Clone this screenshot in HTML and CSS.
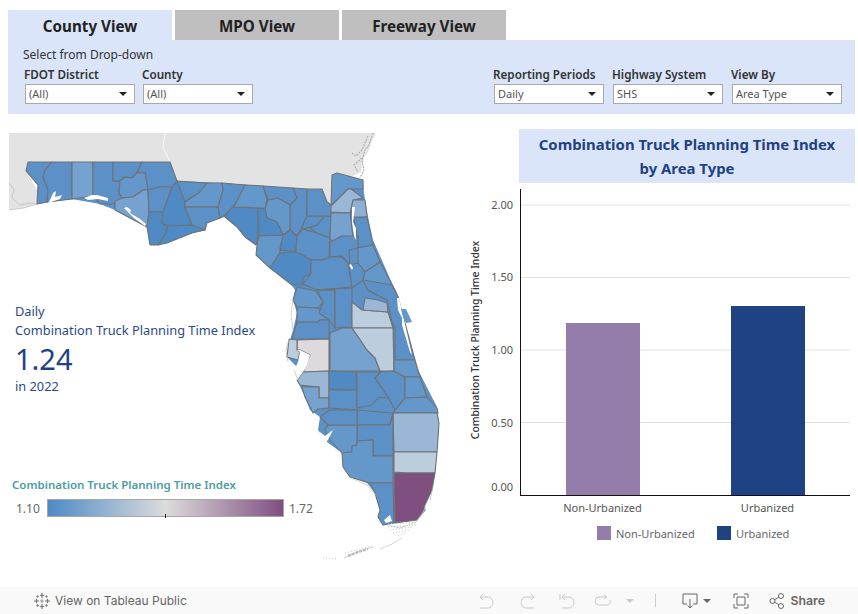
FILE: index.html
```html
<!DOCTYPE html>
<html lang="en">
<head>
  <meta charset="UTF-8">
  <title>Combination Truck Planning Time Index</title>
  <link rel="stylesheet" href="styles.css">
</head>
<body>

  <div class="dashboard">
    <div class="tabs">
      <div class="tab active">County View</div>
      <div class="tab">MPO View</div>
      <div class="tab">Freeway View</div>
    </div>

    <div class="filters">
      <div class="filters-title">Select from Drop-down</div>
      <div class="filter-row">
        <div class="filter-group">
          <div class="filter">
            <div class="filter-label">FDOT District</div>
            <div class="dropdown">(All)</div>
          </div>
          <div class="filter">
            <div class="filter-label">County</div>
            <div class="dropdown">(All)</div>
          </div>
        </div>
        <div class="filter-group right">
          <div class="filter">
            <div class="filter-label">Reporting Periods</div>
            <div class="dropdown">Daily</div>
          </div>
          <div class="filter">
            <div class="filter-label">Highway System</div>
            <div class="dropdown">SHS</div>
          </div>
          <div class="filter">
            <div class="filter-label">View By</div>
            <div class="dropdown">Area Type</div>
          </div>
        </div>
      </div>
    </div>

    <div class="main">
      <div class="map-area">
        <svg class="map" viewBox="8 114 454 473" width="454" height="473">
          <!-- land around florida -->
          <path class="land" d="M9 133H376L372 141 369 150 364 158 361 172 345 180 332 176 332 203 322 201 318 190 222 186 177 184 170 165 28 165 26 171 37 190 37 204 24 208 9 210Z"/>
          <path class="river" d="M165 133L163 147 170 162 175 175 179 181"/>
          <path class="fringe" d="M9 183L14 190 12 198 20 205 30 203 37 204M9 210L24 208 37 204"/>
          <path class="marsh" d="M373 133L369 145 365 150 362 160 364 170 360 178"/>
          <path class="marsh" d="M368 136L362 150 356 156 352 153M362 158L354 165 358 172"/>
          <!-- florida base -->
          <path class="c-b" d="M28 162H170L177 181 222 183 307 189 322 189 327 202 332 205 332 175 337 173 363 180 364 193 368 217 373 240 395 290 398 297 413 360 437 407 439 423 437 452 435 473 432 490 424 507 425 510 417 520 395 523 383 525 378 517 380 510 375 493 367 483 350 477 343 467 342 453 327 442 318 430 320 417 310 410 305 397 297 380 297 367 287 357 290 340 293 330 297 313 293 300 295 290 288 280 273 270 256 255 257 245 245 237 237 227 225 217 220 218 207 223 205 230 192 233 167 243 158 245 150 245 147 227 115 210 100 204 72 199 37 204 38 185 26 171Z"/>
          <g class="counties">
            <polygon class="c-b" points="28,162 52,162 45,170 43,177 48,190 47,202 37,204 38,185 26,171"/>
            <polygon class="c-b" points="52,162 72,162 72,199 47,202 48,190 43,177 45,170"/>
            <polygon class="c-d" points="72,162 93,162 93,196 72,199"/>
            <polygon class="c-b" points="93,162 113,162 113,181 120,181 119,193 122,198 115,204 100,204 93,196"/>
            <polygon class="c-b" points="113,162 142,162 137,173 132,178 125,177 120,181 113,181"/>
            <polygon class="c-b" points="142,162 170,162 177,181 172,187 160,187 148,190 145,173 137,173"/>
            <polygon class="c-c" points="120,181 125,177 132,178 137,173 145,173 148,190 143,190 133,197 122,198 119,193"/>
            <polygon class="c-d" points="115,201 122,198 133,197 143,190 148,190 149,212 147,227 115,210"/>
            <polygon class="c-b" points="148,190 160,187 172,187 163,212 149,212"/>
            <polygon class="c-a" points="149,212 163,212 162,223 168,226 165,235 158,245 150,245 147,227"/>
            <polygon class="c-a" points="172,187 177,181 185,202 185,208 192,225 168,226 162,223 163,212"/>
            <polygon class="c-a" points="168,226 192,225 205,230 192,233 167,243 158,245 165,235"/>
            <polygon class="c-b" points="177,181 207,183 200,192 188,200 185,202"/>
            <polygon class="c-c" points="207,183 222,183 223,190 218,207 185,207 185,202 188,200 200,192"/>
            <polygon class="c-b" points="185,207 218,207 220,218 207,223 205,230 192,225"/>
            <polygon class="c-b" points="222,183 245,185 235,205 225,215 220,218 218,207 223,190"/>
            <polygon class="c-a" points="233,207 258,208 258,236 256,245 245,237 237,227 225,217 225,215"/>
            <polygon class="c-c" points="245,185 263,186 267,200 265,208 258,208 233,207 235,205"/>
            <polygon class="c-b" points="263,186 293,188 297,198 290,205 278,198 268,200"/>
            <polygon class="c-b" points="293,188 307,189 307,216 302,227 297,236 290,230 290,205 297,198"/>
            <polygon class="c-c" points="265,208 268,200 278,198 290,205 290,230 283,235 277,222 267,218"/>
            <polygon class="c-a" points="258,208 265,209 267,218 277,222 283,235 259,236"/>
            <polygon class="c-c" points="259,236 283,235 280,248 280,253 270,268 256,255 257,245"/>
            <polygon class="c-a" points="283,235 290,230 297,236 296,252 280,250"/>
            <polygon class="c-a" points="280,253 296,252 303,255 311,260 311,274 303,277 303,285 292,285 270,268"/>
            <polygon class="c-b" points="297,236 303,229 317,233 330,238 329,258 322,260 311,260 303,255 296,252"/>
            <polygon class="c-b" points="307,216 325,216 317,225 303,229 302,227"/>
            <polygon class="c-b" points="325,216 331,216 330,238 317,233 310,228 317,225"/>
            <polygon class="c-b" points="307,189 322,189 327,202 332,205 331,216 307,216"/>
            <polygon class="c-c" points="332,175 337,173 363,180 363,189 348,189 331,206"/>
            <polygon class="c-f" points="331,212 331,206 348,189 351,189 363,198 353,200 350,213"/>
            <polygon class="c-e" points="353,200 365,200 367,217 353,217 351,210"/>
            <polygon class="c-d" points="331,213 350,213 353,237 342,236 332,242 330,238"/>
            <polygon class="c-b" points="354,218 367,217 373,245 358,248 358,240"/>
            <polygon class="c-b" points="330,242 342,236 358,236 358,248 349,250 350,265 342,256 330,257"/>
            <polygon class="c-c" points="358,248 373,245 380,262 365,272 358,263"/>
            <polygon class="c-b" points="303,284 311,274 311,260 322,260 330,257 342,257 348,263 352,287 317,290"/>
            <polygon class="c-b" points="352,288 349,265 358,263 365,272 363,280"/>
            <polygon class="c-c" points="365,272 380,262 395,290 398,297 387,300 368,290 363,280"/>
            <polygon class="c-b" points="363,280 368,290 387,300 392,322 395,327 395,360 415,360 398,297 392,285"/>
            <polygon class="c-c" points="297,287 316,291 323,302 318,308 297,307 293,300"/>
            <polygon class="c-c" points="297,307 318,308 329,317 329,320 320,320 318,322 297,322"/>
            <polygon class="c-b" points="297,322 318,322 320,320 329,320 329,339 292,339"/>
            <polygon class="c-b" points="317,290 335,290 335,328 329,320 319,313 323,302"/>
            <polygon class="c-b" points="317,290 352,288 352,302 352,328 342,327 335,328 335,290"/>
            <polygon class="c-g" points="352,302 362,310 388,312 393,328 352,328"/>
            <polygon class="c-f" points="363,310 365,298 378,300 387,303 388,312"/>
            <polygon class="c-d" points="330,333 342,328 352,328 359,338 367,350 375,358 380,371 330,371"/>
            <polygon class="c-g" points="352,328 393,328 394,371 380,371 375,358 367,350 359,338"/>
            <polygon class="c-h" points="297,340 329,339 329,371 303,372 310,355 300,350 297,350"/>
            <polygon class="c-g" points="289,339 297,340 297,350 300,352 298,360 287,357"/>
            <polygon class="c-f" points="297,380 303,372 329,371 329,398 319,398 319,387 300,385"/>
            <polygon class="c-d" points="302,387 319,387 319,398 329,398 329,408 318,409 313,413 305,397"/>
            <polygon class="c-a" points="329,371 356,372 357,390 329,389"/>
            <polygon class="c-b" points="329,390 357,390 357,410 329,408"/>
            <polygon class="c-b" points="357,372 381,372 375,378 388,397 378,398 372,405 357,408"/>
            <polygon class="c-b" points="381,372 394,371 405,377 405,398 395,410 388,397 375,378"/>
            <polygon class="c-c" points="394,360 415,360 420,377 405,377 394,371"/>
            <polygon class="c-c" points="405,377 420,377 427,397 405,398"/>
            <polygon class="c-c" points="405,398 427,397 437,408 438,413 393,413"/>
            <polygon class="c-f" points="393,413 437,413 439,423 437,452 394,452"/>
            <polygon class="c-g" points="394,452 437,452 435,473 407,473 394,472"/>
            <polygon class="c-p" points="394,473 435,473 432,490 424,507 425,510 417,520 395,523"/>
            <polygon class="c-b" points="357,410 393,413 390,425 357,425"/>
            <polygon class="c-b" points="357,425 390,425 393,413 393,456 373,456 373,440 357,441"/>
            <polygon class="c-c" points="328,425 357,425 357,445 352,446 352,452 342,453 330,440 325,430"/>
            <polygon class="c-b" points="320,417 329,410 357,410 357,425 328,425"/>
            <polygon class="c-c" points="342,453 352,452 352,446 357,445 357,441 373,440 373,456 393,456 393,483 370,483 350,477 343,467"/>
            <polygon class="c-b" points="370,483 393,483 394,523 383,525 378,517 380,510 375,493"/>
          </g>
          <!-- bays and lagoons -->
          <g class="water">
            <path d="M50 200L53 193 56 191 55 197 62 195 60 199 48 203Z"/>
            <path d="M84 198L92 195 97 195 108 198 108 201 98 199 88 200Z"/>
            <path d="M124 208L127 207 131 210 130 213 140 219 146 224 145 226 134 218Z"/>
            <path d="M167 245L180 240 191 235 188 238 172 248Z"/>
            <path d="M352 207L355 207 353 222 356 228 356 240 354 236 352 222Z"/>
            <path d="M397 298L399 298 412 355 410 352 402 325 402 318 398 310Z"/>
            <path d="M297 350L300 350 310 355 307 365 303 372 297 380 292 375 298 362 300 352Z"/>
            <path d="M320 432L325 436 333 430 328 440 325 443 322 440Z"/>
            <path d="M351 264L349 265 352 270 353 268Z"/>
            <path d="M384 520L390 515 392 521 386 523Z"/>
          </g>
          <polygon class="c-c" points="401,309 406,309 412,322 406,323 403,317"/>
          <!-- keys -->
          <path class="keys" d="M388 525L400 528 416 522 422 514 426 506"/>
          <path class="keys-dots" d="M388 524L418 522M388 527L416 525M390 530L412 527M393 533L409 530M398 536L405 533"/>
          <path class="keys" d="M380 549L392 544 402 538"/>
          <path class="keys" d="M344 558L355 553 365 549 374 547"/>
          <path class="keys-thick" d="M348 556L358 552 368 549"/>
          <path class="keys-dots" d="M323 558L338 559M345 553L372 546"/>
          <path class="fringe" d="M293 300L291 315 293 330M289 339L286 350 288 362M298 380L294 370M351 478L367 485 376 495M433 487L430 500"/>
        </svg>

        <div class="kpi">
          <div class="kpi-line">Daily</div>
          <div class="kpi-line">Combination Truck Planning Time Index</div>
          <div class="kpi-value">1.24</div>
          <div class="kpi-line">in 2022</div>
        </div>

        <div class="legend">
          <div class="legend-title">Combination Truck Planning Time Index</div>
          <div class="legend-scale">
            <span>1.10</span>
            <div class="legend-bar"><i class="legend-tick"></i></div>
            <span>1.72</span>
          </div>
        </div>
      </div>

      <div class="chart-area">
        <div class="chart-title">Combination Truck Planning Time Index<br>by Area Type</div>
        <svg class="chart" width="393" height="373" viewBox="462 189 393 373">
          <text class="axis-title" transform="translate(479 340) rotate(-90)" text-anchor="middle">Combination Truck Planning Time Index</text>
          <line class="grid" x1="520" y1="205" x2="850" y2="205"/>
          <line class="grid" x1="520" y1="277.5" x2="850" y2="277.5"/>
          <line class="grid" x1="520" y1="350" x2="850" y2="350"/>
          <line class="grid" x1="520" y1="422.5" x2="850" y2="422.5"/>
          <text class="tick" x="513" y="209" text-anchor="end">2.00</text>
          <text class="tick" x="513" y="281" text-anchor="end">1.50</text>
          <text class="tick" x="513" y="354" text-anchor="end">1.00</text>
          <text class="tick" x="513" y="427" text-anchor="end">0.50</text>
          <text class="tick" x="513" y="491" text-anchor="end">0.00</text>
          <rect class="bar-non" x="566" y="323" width="74" height="172"/>
          <rect class="bar-urb" x="731" y="306" width="74" height="189"/>
          <line class="axis" x1="520.5" y1="189" x2="520.5" y2="496"/>
          <line class="axis" x1="520" y1="495.5" x2="850" y2="495.5"/>
          <text class="tick" x="602.5" y="512" text-anchor="middle">Non-Urbanized</text>
          <text class="tick" x="767.5" y="512" text-anchor="middle">Urbanized</text>
          <rect class="bar-non" x="597" y="526" width="14" height="14"/>
          <text class="legend-label" x="616" y="538">Non-Urbanized</text>
          <rect class="bar-urb" x="717" y="526" width="14" height="14"/>
          <text class="legend-label" x="736" y="538">Urbanized</text>
        </svg>
      </div>
    </div>
  </div>

  <div class="toolbar">
    <div class="toolbar-link">
      <svg class="logo" width="18" height="18" viewBox="0 0 18 18">
        <path d="M9 1v5M6.800 3.500h4.400M9 12v5M6.800 14.500h4.400M3.500 6.800v4.400M1 9h5M14.500 6.800v4.400M12 9h5"/>
        <path class="logo-thin" d="M4.500 3v3M3 4.500h3M13.500 3v3M12 4.500h3M4.500 12v3M3 13.500h3M13.500 12v3M12 13.500h3M9 7v4M7 9h4"/>
      </svg>
      <span>View on Tableau Public</span>
    </div>
    <div class="toolbar-actions">
      <svg class="tool-off" width="16" height="16" viewBox="0 0 16 16"><path d="M1 4h8a5 5.500 0 0 1 0 11H1M4 1L1 4l3 3"/></svg>
      <svg class="tool-off" width="16" height="16" viewBox="0 0 16 16"><path d="M15 4H7a5 5.500 0 0 0 0 11h8M12 1l3 3-3 3"/></svg>
      <svg class="tool-off" width="16" height="16" viewBox="0 0 16 16"><path d="M1 1v6M3 4h7a5 5.500 0 0 1 0 11H3M6 1L3 4l3 3"/></svg>
      <svg class="tool-off replay" width="18" height="16" viewBox="0 0 18 16"><path d="M12 4H5a3.500 3.500 0 0 0 0 8h8a3.500 3.500 0 0 0 3-5M10 2l3 2-3 2"/></svg>
      <i class="caret caret-off"></i>
      <i class="tool-sep"></i>
      <span class="tool-group download">
        <svg class="tool-on" width="16" height="16" viewBox="0 0 16 16"><path d="M5 11H1V1h14v10h-4M8 6v9M5.500 12.500L8 15l2.500-2.500"/></svg>
        <i class="caret"></i>
      </span>
      <svg class="tool-on fullscreen" width="16" height="16" viewBox="0 0 16 16"><path d="M1 5V1h4M11 1h4v4M15 11v4h-4M5 15H1v-4M4 4h8v8H4z"/></svg>
      <span class="tool-group share">
        <svg class="tool-on" width="16" height="16" viewBox="0 0 16 16"><circle cx="3.500" cy="8" r="2.500"/><circle cx="12" cy="3" r="2.500"/><circle cx="12" cy="13" r="2.500"/><path d="M5.700 6.700L9.800 4.300M5.700 9.300l4.100 2.400"/></svg>
        <span>Share</span>
      </span>
    </div>
  </div>

</body>
</html>
```

FILE: styles.css
```css
body {
  margin: 0;
  font-family: "Noto Sans", "Open Sans", sans-serif;
  background-color: #fff;
  color: #333;
}

.dashboard {
  padding: 10px 3px 0 8px;
  height: 577px;
}

.tabs {
  display: flex;
  gap: 3px;
}

.tab {
  width: 164px;
  height: 30px;
  line-height: 33px;
  text-align: center;
  font-size: 15.200px;
  font-weight: bold;
  color: #222;
  background-color: #bfbfbf;
}

.tab.active {
  background-color: #dae5f9;
}

.filters {
  height: 74px;
  box-sizing: border-box;
  padding: 7px 13px 0 17px;
  background-color: #dae5f9;
}

.filters-title {
  font-size: 12px;
  line-height: 16px;
  margin-left: -2px;
  color: #333;
}

.filter-row {
  display: flex;
  justify-content: space-between;
  margin-top: 4px;
}

.filter-group {
  display: flex;
  gap: 8px;
}

.filter-group.right {
  gap: 9px;
}

.filter-label {
  font-size: 11.700px;
  line-height: 14px;
  font-weight: 600;
  color: #333;
  margin-left: -1px;
  margin-bottom: 3px;
}

.dropdown {
  position: relative;
  box-sizing: border-box;
  width: 110px;
  height: 20px;
  line-height: 18px;
  padding-left: 3px;
  font-size: 11px;
  color: #555;
  background-color: #fff;
  border: 1px solid #a9a9a9;
}

.dropdown::after {
  content: "";
  position: absolute;
  right: 7px;
  top: 7px;
  border-left: 4px solid transparent;
  border-right: 4px solid transparent;
  border-top: 4px solid #222;
}

.main {
  display: flex;
  height: 473px;
}

.map-area {
  position: relative;
  width: 454px;
}

.map {
  position: absolute;
  left: 0;
  top: 0;
}

.kpi,
.legend {
  position: relative;
}

.kpi {
  padding: 188px 0 0 7px;
  color: #2b4a85;
}

.kpi-line {
  font-size: 12.800px;
  line-height: 19px;
}

.kpi-value {
  font-size: 29px;
  line-height: 37px;
  color: #1f4283;
}

.legend {
  margin-top: 81px;
  padding-left: 4px;
}

.legend-title {
  font-size: 11.500px;
  line-height: 16px;
  font-weight: 600;
  color: #4b9e9e;
}

.legend-scale {
  display: flex;
  align-items: center;
  gap: 5px;
  margin-top: 6px;
  font-size: 12px;
  color: #666;
}

.legend-scale span {
  width: 26px;
}

.legend-scale span:first-child {
  margin-left: 4px;
}

.legend-bar {
  position: relative;
  box-sizing: border-box;
  width: 237px;
  height: 18px;
  border: 1px solid #a8a4a0;
  background: linear-gradient(to right, #4e8ac6, #dcdcdc 50%, #7f4f80);
}

.legend-tick {
  position: absolute;
  left: 117px;
  bottom: -2px;
  width: 1px;
  height: 4px;
  background-color: #222;
}

.chart-area {
  width: 393px;
  padding-top: 15px;
}

.chart-title {
  margin-left: 57px;
  height: 54px;
  box-sizing: border-box;
  padding-top: 4px;
  line-height: 23.500px;
  text-align: center;
  font-size: 14.900px;
  font-weight: bold;
  color: #1f4283;
  background-color: #dae5f9;
}

.chart {
  display: block;
  margin-top: 6px;
}

.axis-title {
  font-size: 10.400px;
  font-weight: 500;
  fill: #333;
}

.tick {
  font-size: 11px;
  fill: #555;
}

.legend-label {
  font-size: 11px;
  fill: #666;
}

.grid {
  stroke: #e2e2e2;
  stroke-width: 1;
}

.axis {
  stroke: #111;
  stroke-width: 1;
}

.bar-non {
  fill: #947cab;
}

.bar-urb {
  fill: #1f4283;
}

/* map colours */
.land {
  fill: #e3e3e3;
}

.river {
  fill: none;
  stroke: #f4f4f4;
  stroke-width: 1.200;
}

.fringe {
  fill: none;
  stroke: #bdbdbd;
  stroke-width: 0.700;
}

.marsh {
  fill: none;
  stroke: #b0b0b0;
  stroke-width: 1.200;
  stroke-dasharray: 2 1;
}

.counties polygon {
  stroke: #6f7276;
  stroke-width: 1.100;
  stroke-linejoin: round;
}

.water {
  fill: #fff;
}

.keys {
  fill: none;
  stroke: #c8c8c8;
  stroke-width: 0.800;
}

.keys-thick {
  fill: none;
  stroke: #bdbdbd;
  stroke-width: 2.500;
  stroke-dasharray: 3 1;
}

.keys-dots {
  fill: none;
  stroke: #c4c4c4;
  stroke-width: 1;
  stroke-dasharray: 1 2;
}

.c-a { fill: #4f8ac5; }
.c-b { fill: #5b91c7; }
.c-c { fill: #6598ca; }
.c-d { fill: #76a2cf; }
.c-e { fill: #8fb0d3; }
.c-f { fill: #9ab8d6; }
.c-g { fill: #bccddd; }
.c-h { fill: #dcdadd; }
.c-p { fill: #7f4f80; }

/* footer */
.toolbar {
  display: flex;
  justify-content: space-between;
  align-items: center;
  height: 27px;
  padding: 0 33px;
  background-color: #f9f9f9;
  font-family: "Inter", "Liberation Sans", sans-serif;
  font-size: 12px;
  color: #666;
}

.toolbar-link,
.toolbar-actions,
.tool-group {
  display: flex;
  align-items: center;
}

.toolbar-link {
  gap: 4px;
}

.logo path {
  fill: none;
  stroke: #777;
  stroke-width: 1.200;
}

.logo .logo-thin {
  stroke-width: 0.700;
}

.toolbar-actions {
  gap: 24px;
}

.tool-off,
.tool-on {
  fill: none;
  stroke-width: 1;
}

.tool-off {
  stroke: #c9c9c9;
}

.tool-on {
  stroke: #666;
}

.replay {
  margin-left: -5px;
}

.caret {
  width: 0;
  height: 0;
  border-left: 4px solid transparent;
  border-right: 4px solid transparent;
  border-top: 4px solid #666;
}

.caret-off {
  border-top-color: #ccc;
  margin-left: -10px;
}

.tool-sep {
  width: 1px;
  height: 13px;
  margin-left: -3px;
  background-color: #ccc;
}

.tool-group {
  gap: 5px;
}

.download {
  margin-left: 2px;
}

.fullscreen {
  margin-left: -2px;
}

.share {
  margin-left: -4px;
  gap: 6px;
}

.share span {
  font-size: 12.300px;
  font-weight: 600;
}
```
